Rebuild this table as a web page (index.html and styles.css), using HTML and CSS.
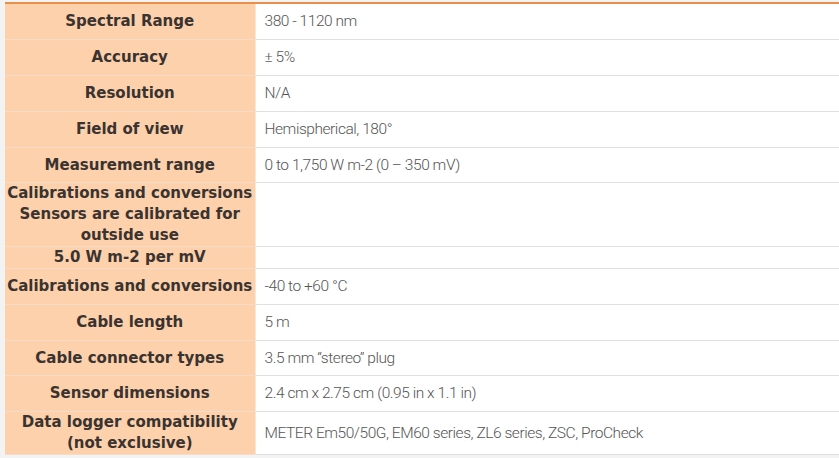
FILE: index.html
```html
<!DOCTYPE html>
<html>
<head>
<meta charset="utf-8">
<link rel="stylesheet" href="styles.css">
</head>
<body>
<div class="page">
<table class="specs">
  <tbody>
    <tr><th>Spectral Range</th><td>380 - 1120 nm</td></tr>
    <tr><th>Accuracy</th><td>±&nbsp;5%</td></tr>
    <tr><th>Resolution</th><td>N/A</td></tr>
    <tr><th>Field of view</th><td>Hemispherical, 180°</td></tr>
    <tr class="r35"><th>Measurement range</th><td>0 to 1,750 W m-2 (0 – 350 mV)</td></tr>
    <tr class="tall"><th>Calibrations and conversions<br>Sensors are calibrated for outside use</th><td></td></tr>
    <tr class="short"><th>5.0 W m-2 per mV</th><td></td></tr>
    <tr><th>Calibrations and conversions</th><td>-40 to +60 °C</td></tr>
    <tr><th>Cable length</th><td>5 m</td></tr>
    <tr class="r35"><th>Cable connector types</th><td>3.5 mm “stereo” plug</td></tr>
    <tr><th>Sensor dimensions</th><td>2.4 cm x 2.75 cm (0.95 in x 1.1 in)</td></tr>
    <tr class="last"><th>Data logger compatibility<br>(not exclusive)</th><td>METER Em50/50G, EM60 series, ZL6 series, ZSC, ProCheck</td></tr>
  </tbody>
</table>
</div>
</body>
</html>
```

FILE: styles.css
```css
html, body {
  margin: 0;
  padding: 0;
  background: #f3f3f3;
  overflow: hidden;
}
.page {
  padding: 2px 0 0 5px;
}
.specs {
  border-collapse: collapse;
  border-top: 2px solid #e8904a;
  width: 834px;
}
.specs th {
  width: 250px;
  height: 35px;
  padding: 0 2px;
  box-sizing: border-box;
  background: #fcd1ac;
  color: #3a3330;
  font-family: "DejaVu Sans", sans-serif;
  font-weight: bold;
  font-size: 15px;
  line-height: 21px;
  text-align: center;
  vertical-align: middle;
  border-bottom: 1px solid #f6dcc6;
  border-right: 1px solid #f8e6d6;
}
.specs td {
  height: 35px;
  padding: 0 0 0 9px;
  background: #ffffff;
  color: #555555;
  font-family: "Roboto", sans-serif;
  font-weight: 300;
  font-size: 15.5px;
  letter-spacing: -0.45px;
  line-height: 21px;
  vertical-align: middle;
  border-bottom: 1px solid #e0e0e0;
}
.specs tr.r35 th, .specs tr.r35 td { height: 34px; }
.specs tr.tall th, .specs tr.tall td { height: 63px; }
.specs tr.short th, .specs tr.short td { height: 20px; }
.specs tr.last th, .specs tr.last td { height: 41px; }
```
